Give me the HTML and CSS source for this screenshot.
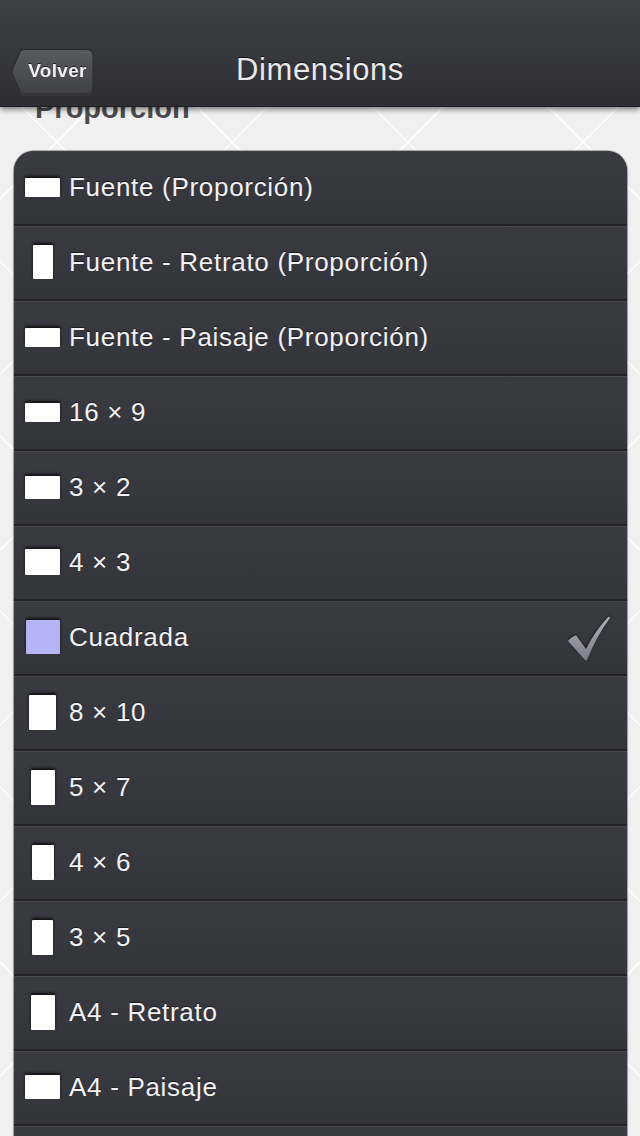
FILE: index.html
```html
<!DOCTYPE html>
<html lang="es">
<head>
<meta charset="utf-8">
<title>Dimensions</title>
<link rel="stylesheet" href="styles.css">
</head>
<body>
<header class="nav">
  <div class="nav-left">
    <button class="back" type="button">
      <svg class="back-shape" width="84" height="49" viewBox="0 0 84 49">
        <defs>
          <linearGradient id="bg" x1="0" y1="0" x2="0" y2="1">
            <stop offset="0" stop-color="#5a5a62"/>
            <stop offset="1" stop-color="#404047"/>
          </linearGradient>
        </defs>
        <path d="M12.5 1.5 H76 Q82 1.5 82 7.5 V40 Q82 46 76 46 H12.5 Q10 46 9 43.5 L1.3 26 Q0.6 24 1.3 22 L9 4 Q10 1.5 12.5 1.5 Z" fill="url(#bg)" stroke="#26262b" stroke-width="1"/>
      </svg>
      <span class="back-label">Volver</span>
    </button>
  </div>
  <h1 class="nav-title">Dimensions</h1>
  <div class="nav-right"></div>
</header>

<main class="content">
  <h2 class="section-title">Proporción</h2>
  <ul class="list">
    <li class="row"><span class="ico"><span class="shape" style="width:35px;height:19px"></span></span><span class="label">Fuente (Proporción)</span></li>
    <li class="row"><span class="ico"><span class="shape" style="width:20px;height:34px"></span></span><span class="label">Fuente - Retrato (Proporción)</span></li>
    <li class="row"><span class="ico"><span class="shape" style="width:35px;height:19px"></span></span><span class="label">Fuente - Paisaje (Proporción)</span></li>
    <li class="row"><span class="ico"><span class="shape" style="width:35px;height:19px"></span></span><span class="label">16 × 9</span></li>
    <li class="row"><span class="ico"><span class="shape" style="width:35px;height:23px"></span></span><span class="label">3 × 2</span></li>
    <li class="row"><span class="ico"><span class="shape" style="width:35px;height:26px"></span></span><span class="label">4 × 3</span></li>
    <li class="row"><span class="ico"><span class="shape selected" style="width:34px;height:34px"></span></span><span class="label">Cuadrada</span>
      <svg class="check" width="46" height="50" viewBox="0 0 46 50">
        <defs>
          <linearGradient id="ck" x1="0" y1="0" x2="0" y2="1">
            <stop offset="0" stop-color="#b0b0bc"/>
            <stop offset="1" stop-color="#7c7c8a"/>
          </linearGradient>
        </defs>
        <path d="M3 28 Q5 25 11 22 L21 36 Q30 18 43 4 Q45 3 45 5 Q32 22 22 47 Q21 48.5 20 47 Z" fill="url(#ck)"/>
      </svg>
    </li>
    <li class="row"><span class="ico"><span class="shape" style="width:27px;height:35px"></span></span><span class="label">8 × 10</span></li>
    <li class="row"><span class="ico"><span class="shape" style="width:24px;height:35px"></span></span><span class="label">5 × 7</span></li>
    <li class="row"><span class="ico"><span class="shape" style="width:22px;height:35px"></span></span><span class="label">4 × 6</span></li>
    <li class="row"><span class="ico"><span class="shape" style="width:21px;height:35px"></span></span><span class="label">3 × 5</span></li>
    <li class="row"><span class="ico"><span class="shape" style="width:24px;height:35px"></span></span><span class="label">A4 - Retrato</span></li>
    <li class="row"><span class="ico"><span class="shape" style="width:35px;height:24px"></span></span><span class="label">A4 - Paisaje</span></li>
    <li class="row"><span class="ico"></span><span class="label"></span></li>
  </ul>
</main>
</body>
</html>
```

FILE: styles.css
```css
html, body {
  margin: 0;
  padding: 0;
}

body {
  width: 640px;
  height: 1136px;
  overflow: hidden;
  position: relative;
  font-family: "Liberation Sans", Arial, sans-serif;
  background-color: #f0f0f0;
  background-image:
    repeating-linear-gradient(45deg, rgba(255,255,255,0) 0 122px, rgba(255,255,255,0.75) 122px 124px),
    repeating-linear-gradient(-45deg, rgba(255,255,255,0) 0 122px, rgba(255,255,255,0.75) 122px 124px);
}

.nav {
  position: absolute;
  top: 0;
  left: 0;
  right: 0;
  height: 107px;
  box-sizing: border-box;
  padding-top: 38px;
  display: grid;
  grid-template-columns: 1fr auto 1fr;
  align-items: center;
  background: linear-gradient(#3f3f47 0%, #36363d 55%, #2d2d33 100%);
  border-bottom: 1px solid #1e1e22;
  box-shadow: 0 2px 6px rgba(0,0,0,0.55);
  z-index: 2;
}

.nav-left {
  display: flex;
  align-items: center;
  padding-left: 11px;
}

.back {
  display: grid;
  padding: 0;
  margin: 0;
  border: 0;
  background: none;
  width: 84px;
  height: 49px;
  cursor: pointer;
  filter: drop-shadow(0 1px 0 rgba(255,255,255,0.08));
}

.back-shape,
.back-label {
  grid-area: 1 / 1;
}

.back-label {
  display: flex;
  align-items: center;
  justify-content: center;
  padding-left: 9px;
  padding-bottom: 3px;
  font-family: "Liberation Sans", Arial, sans-serif;
  font-weight: bold;
  font-size: 19px;
  letter-spacing: 0.3px;
  color: #f2f2f2;
  text-shadow: 0 -1px 0 rgba(0,0,0,0.6);
}

.nav-title {
  margin: 0;
  padding-bottom: 4px;
  font-family: "Liberation Sans", Arial, sans-serif;
  font-weight: normal;
  font-size: 31px;
  letter-spacing: 0.6px;
  color: #e9e9ec;
  text-shadow: 0 -1px 0 rgba(0,0,0,0.7);
}

.content {
  padding-top: 90px;
}

.section-title {
  margin: 0 0 0 35px;
  height: 36px;
  line-height: 36px;
  font-size: 29px;
  font-weight: bold;
  color: #4c4c4f;
  text-shadow: 0 1px 0 rgba(255,255,255,0.8);
}

.list {
  list-style: none;
  margin: 25px 13px 0 14px;
  padding: 0;
  border-radius: 20px 20px 0 0;
  overflow: hidden;
  background: #35353c;
  box-shadow: 0 0 0 1px rgba(0,0,0,0.25), 0 1px 3px rgba(0,0,0,0.3);
}

.row {
  height: 75px;
  box-sizing: border-box;
  display: flex;
  align-items: center;
  padding-bottom: 2px;
  border-top: 1px solid #48484f;
  border-bottom: 2px solid #232328;
  background: linear-gradient(#3a3a42, #34343b);
}

.row:first-child {
  border-top-color: #3e3e46;
}

.ico {
  width: 35px;
  height: 35px;
  margin-left: 11px;
  margin-right: 9px;
  display: flex;
  align-items: center;
  justify-content: center;
  flex: none;
}

.shape {
  display: block;
  background: #ffffff;
  border-radius: 1px;
  box-shadow: 0 -2px 3px rgba(0,0,0,0.75);
}

.shape.selected {
  background: #b5b5f6;
}

.label {
  font-size: 26px;
  letter-spacing: 0.7px;
  color: #f2f2f4;
  text-shadow: 0 -1px 0 rgba(0,0,0,0.5);
  white-space: nowrap;
}

.check {
  margin-left: auto;
  margin-right: 16px;
  margin-top: 2px;
  filter: drop-shadow(0 -1px 1px rgba(0,0,0,0.6));
}
```
